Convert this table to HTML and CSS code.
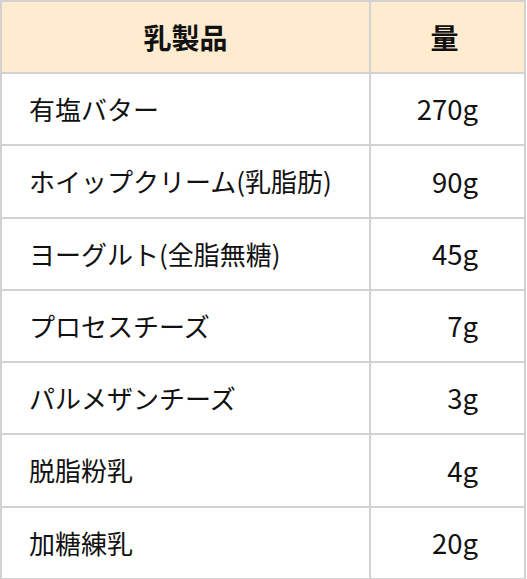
FILE: index.html
```html
<!DOCTYPE html>
<html lang="ja">
<head>
<meta charset="utf-8">
<link rel="stylesheet" href="styles.css">
</head>
<body>
<table class="dairy">
  <thead>
    <tr><th class="name">乳製品</th><th class="amt">量</th></tr>
  </thead>
  <tbody>
    <tr><td class="name">有塩バター</td><td class="amt">270g</td></tr>
    <tr><td class="name">ホイップクリーム(乳脂肪)</td><td class="amt">90g</td></tr>
    <tr><td class="name">ヨーグルト(全脂無糖)</td><td class="amt">45g</td></tr>
    <tr><td class="name">プロセスチーズ</td><td class="amt">7g</td></tr>
    <tr><td class="name">パルメザンチーズ</td><td class="amt">3g</td></tr>
    <tr><td class="name">脱脂粉乳</td><td class="amt">4g</td></tr>
    <tr><td class="name">加糖練乳</td><td class="amt">20g</td></tr>
  </tbody>
</table>
</body>
</html>
```
FILE: styles.css
```css
html, body {
  margin: 0;
  padding: 0;
  background: #ffffff;
}
.dairy {
  border-collapse: separate;
  border-spacing: 0;
  border-top: 2px solid #d2d2d2;
  border-left: 2px solid #d2d2d2;
  width: 526px;
  table-layout: fixed;
  font-family: "Noto Sans CJK JP", "Noto Sans", sans-serif;
  color: #111;
  font-size: 26px;
}
.dairy th, .dairy td {
  border-right: 2px solid #d2d2d2;
  border-bottom: 2px solid #d2d2d2;
  height: 72.25px;
  padding: 0;
  box-sizing: border-box;
  vertical-align: middle;
  line-height: 1;
}
.dairy th {
  background: #ffebd0;
  font-weight: 700;
  font-size: 28px;
  text-align: center;
  height: 72px;
}
.dairy th.name { width: 369px; }
.dairy th.amt { padding-right: 6px; }
.dairy td.name {
  text-align: left;
  padding-left: 27px;
}
.dairy td.amt {
  text-align: right;
  padding-right: 46px;
  font-size: 27.5px;
}
```
